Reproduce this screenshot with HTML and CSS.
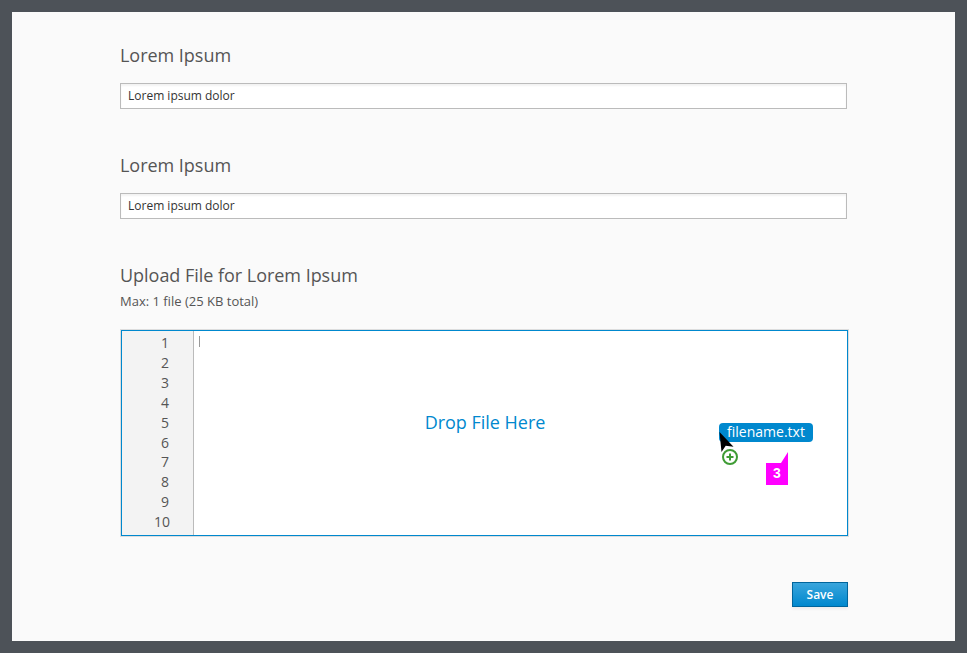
FILE: index.html
```html
<!DOCTYPE html>
<html lang="en">
<head>
<meta charset="utf-8">
<title>Upload file</title>
<link rel="stylesheet" href="styles.css">
</head>
<body>
<form class="form">
  <label class="field"><span class="title">Lorem Ipsum</span><input class="input" type="text" value="Lorem ipsum dolor"></label>
  <label class="field"><span class="title">Lorem Ipsum</span><input class="input" type="text" value="Lorem ipsum dolor"></label>
  <div class="title">Upload File for Lorem Ipsum</div>
  <div class="hint">Max: 1 file (25 KB total)</div>
  <div class="editor">
    <div class="gutter"><span>1</span><span>2</span><span>3</span><span>4</span><span>5</span><span>6</span><span>7</span><span>8</span><span>9</span><span class="wide">10</span></div>
    <div class="area"><i class="caret"></i></div>
    <div class="drop">Drop File Here</div>
    <div class="drag">filename.txt</div>
    <svg class="overlay" width="100" height="70" viewBox="0 0 100 70">
      <circle cx="13" cy="35" r="7" fill="#fff" stroke="#3f9c35" stroke-width="2"/>
      <path d="M9.500 35H16.500M13 31.500V38.500" stroke="#3f9c35" stroke-width="2"/>
      <path d="M2.500 10L4.500 30L8.700 23.700L16.500 24.700Z" fill="#000"/>
      <path d="M49 41H64L71 30V63H49Z" fill="#f0f"/>
    </svg>
    <span class="step">3</span>
  </div>
  <button class="save" type="button">Save</button>
</form>
</body>
</html>
```
FILE: styles.css
```css
* { box-sizing: border-box; }
body { margin: 0; height: 653px; border: 12px solid #4d5258; background: #fafafa; font-family: "Open Sans", sans-serif; color: #555; }
.form { width: 728px; margin-left: 108px; padding-top: 30px; display: flex; flex-direction: column; }
.field { display: block; height: 110px; width: 727px; }
.title { display: block; font-size: 18px; line-height: 27px; letter-spacing: -.03px; }
.input { display: block; width: 727px; height: 26px; margin-top: 14px; padding: 0 7px 1px; border: 1px solid #bbb; background: #fff; box-shadow: inset 0 2px 2px rgba(0,0,0,.05); font: 12px "Open Sans", sans-serif; color: #333; }
.hint { font-size: 13px; line-height: 18px; margin-top: 3px; }
.editor { position: relative; display: flex; width: 727px; height: 206px; margin: 20px 0 0 1px; border: 1px solid #0088ce; box-shadow: 0 0 0 1px #ddd; background: #fff; }
.gutter { width: 72px; border-right: 1px solid #bbb; background: #f3f3f3; padding: 2px 24px 0 0; font-size: 14px; line-height: 19.900px; text-align: right; }
.gutter span { display: block; }
.gutter .wide { margin-right: -1px; }
.area { padding: 5px; }
.caret { display: block; width: 1px; height: 11px; background: #999; }
.drop { position: absolute; left: 1px; right: 0; top: 78px; text-align: center; font-size: 18px; line-height: 27px; letter-spacing: -.02px; color: #0088ce; }
.drag { position: absolute; left: 597px; top: 92px; width: 94px; height: 19px; border-radius: 4px; background: #0088ce; color: #fff; font-size: 14px; line-height: 18px; text-align: center; }
.overlay { position: absolute; left: 595px; top: 91px; }
.step { position: absolute; left: 644px; top: 131px; width: 22px; text-align: center; font: bold 14px/22px "Liberation Sans", sans-serif; color: #fff; }
.save { align-self: flex-end; width: 56px; height: 25px; margin-top: 46px; padding: 0; border: 1px solid #00659c; background: linear-gradient(#39a5dc, #0088ce); box-shadow: 0 2px 3px rgba(0,0,0,.06); color: #fff; font: 600 12px "Open Sans", sans-serif; }
```
